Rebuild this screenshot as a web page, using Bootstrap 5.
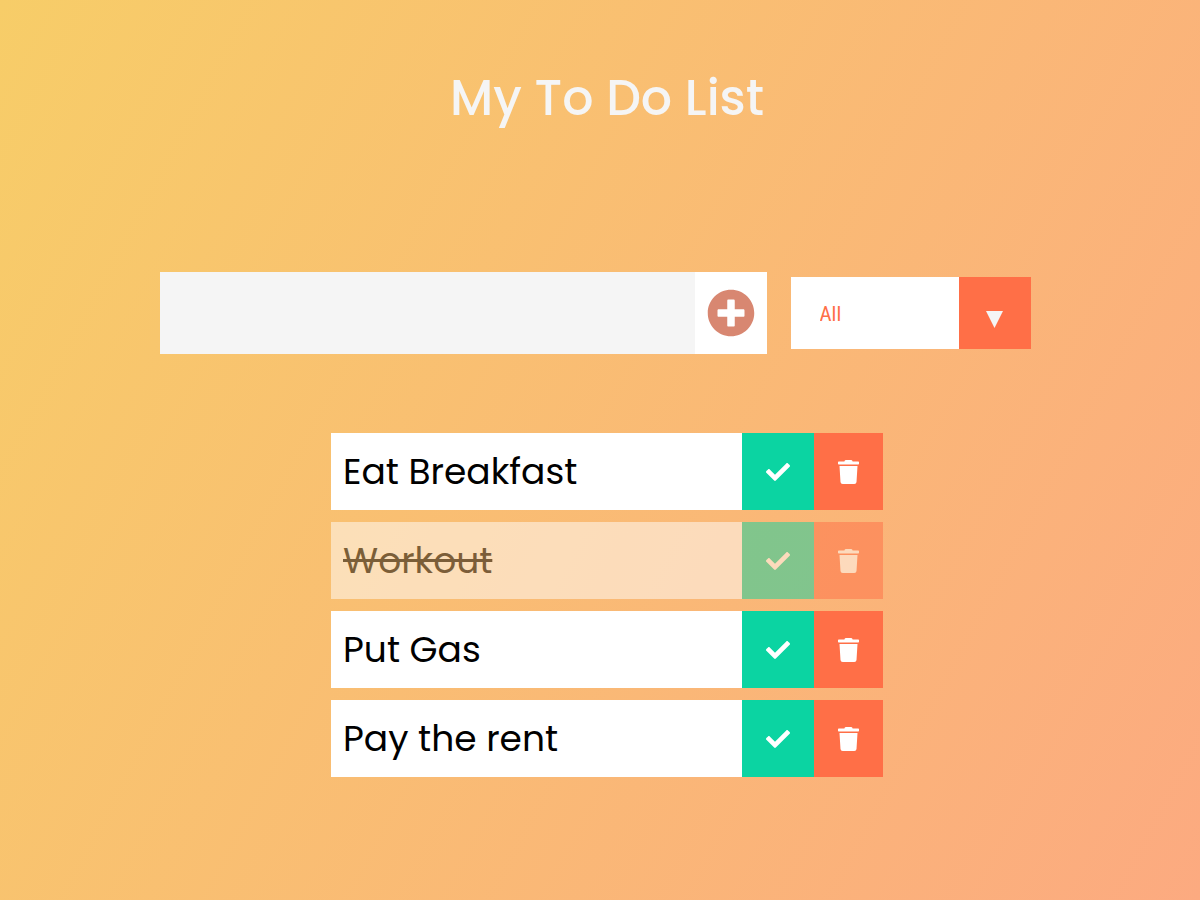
<!DOCTYPE html>
<html lang="en">
<head>
<meta charset="utf-8">
<meta name="viewport" content="width=device-width, initial-scale=1">
<title>My To Do List</title>
<link href="https://cdn.jsdelivr.net/npm/bootstrap@5.3.0/dist/css/bootstrap.min.css" rel="stylesheet">
<style>
  body {
    font-family: Poppins, Inter, sans-serif;
    color: #f5f5f5;
    min-height: 100vh;
    background: linear-gradient(118deg, #f7cd68, #fcaa80);
  }
  .page-shift { padding-left: 14px; }
  .page-title { font-size: 49px; line-height: 72px; font-weight: 500; padding: 62px 0 58px; margin-bottom: 80px; }
  .entry-form { margin-bottom: 79px; gap: 24px; padding-right: 24px; }
  .entry-group { width: 607px; height: 82px; max-width: 100%; }
  .entry-input { background: #f5f5f5; font-size: 32px; border: 0; }
  .entry-input:focus { background: #fff; box-shadow: none; }
  .entry-add { width: 72px; background: #fff; color: #d88771; }
  .filter { width: 240px; height: 72px; background: #fff; }
  .filter-select { appearance: none; color: #ff6f47; font: 21px/30px "Roboto Condensed", Roboto, sans-serif; padding: 2px 72px 0 29px; }
  .filter-arrow { width: 72px; padding-top: 12px; background: #ff6f47; color: #f5f5f5; pointer-events: none; }
  .todo-list { max-width: 552px; gap: 12px; }
  .todo-item { height: 77px; background: #fff; color: #000; font-size: 36px; }
  .todo-item.completed { opacity: .5; }
  .todo-item.completed .todo-text { text-decoration: line-through; }
  .todo-check { width: 72px; background: #0bd4a2; color: #fff; }
  .todo-trash { width: 69px; background: #ff6f47; color: #fff; }
</style>
</head>
<body>
<svg class="d-none">
  <symbol id="plus" viewBox="0 0 512 512"><path d="M256 8C119 8 8 119 8 256s111 248 248 248 248-111 248-248S393 8 256 8zm144 276c0 6.600-5.400 12-12 12h-92v92c0 6.600-5.400 12-12 12h-56c-6.600 0-12-5.400-12-12v-92h-92c-6.600 0-12-5.400-12-12v-56c0-6.600 5.400-12 12-12h92v-92c0-6.600 5.400-12 12-12h56c6.600 0 12 5.400 12 12v92h92c6.600 0 12 5.400 12 12v56z"/></symbol>
  <symbol id="check" viewBox="0 0 512 512"><path d="M173.898 439.404l-166.4-166.4c-9.997-9.997-9.997-26.206 0-36.204l36.203-36.204c9.997-9.998 26.207-9.998 36.204 0L192 312.690 432.095 72.596c9.997-9.997 26.207-9.997 36.204 0l36.203 36.204c9.997 9.997 9.997 26.206 0 36.204l-294.400 294.401c-9.998 9.997-26.207 9.997-36.204-.001z"/></symbol>
  <symbol id="trash" viewBox="0 0 448 512"><path d="M432 32H312l-9.400-18.700A24 24 0 0 0 281.100 0H166.800a23.720 23.720 0 0 0-21.400 13.300L136 32H16A16 16 0 0 0 0 48v32a16 16 0 0 0 16 16h416a16 16 0 0 0 16-16V48a16 16 0 0 0-16-16zM32 128l21.200 339a48 48 0 0 0 47.900 45h245.800a48 48 0 0 0 47.900-45L416 128z"/></symbol>
</svg>
<div class="page-shift">
  <header><h1 class="page-title text-center">My To Do List</h1></header>
  <main>
    <form class="entry-form d-flex flex-wrap justify-content-center align-items-center">
      <div class="entry-group d-flex">
        <input type="text" class="entry-input form-control rounded-0" aria-label="New task">
        <button type="button" class="entry-add btn rounded-0 border-0 p-0 flex-shrink-0 d-flex align-items-center justify-content-center" aria-label="Add task">
          <svg width="48" height="48" fill="currentColor"><use href="#plus"/></svg>
        </button>
      </div>
      <div class="filter position-relative">
        <select class="filter-select w-100 h-100 border-0 rounded-0 bg-transparent" aria-label="Filter tasks">
          <option>All</option>
          <option>Completed</option>
          <option>Uncompleted</option>
        </select>
        <span class="filter-arrow position-absolute top-0 end-0 h-100 d-flex align-items-center justify-content-center">
          <svg width="17" height="17" viewBox="0 0 17 17" fill="currentColor"><path d="M0 0H17L8.500 17z"/></svg>
        </span>
      </div>
    </form>
    <ul class="todo-list list-unstyled d-flex flex-column mx-auto mb-0">
      <li class="todo-item d-flex">
        <span class="todo-text flex-grow-1 align-self-center px-2 ms-1">Eat Breakfast</span>
        <button type="button" class="todo-check btn rounded-0 border-0 p-0 d-flex align-items-center justify-content-center" aria-label="Complete Eat Breakfast"><svg width="24" height="24" fill="currentColor"><use href="#check"/></svg></button>
        <button type="button" class="todo-trash btn rounded-0 border-0 p-0 d-flex align-items-center justify-content-center" aria-label="Delete Eat Breakfast"><svg width="21" height="24" fill="currentColor"><use href="#trash"/></svg></button>
      </li>
      <li class="todo-item completed d-flex">
        <span class="todo-text flex-grow-1 align-self-center px-2 ms-1">Workout</span>
        <button type="button" class="todo-check btn rounded-0 border-0 p-0 d-flex align-items-center justify-content-center" aria-label="Complete Workout"><svg width="24" height="24" fill="currentColor"><use href="#check"/></svg></button>
        <button type="button" class="todo-trash btn rounded-0 border-0 p-0 d-flex align-items-center justify-content-center" aria-label="Delete Workout"><svg width="21" height="24" fill="currentColor"><use href="#trash"/></svg></button>
      </li>
      <li class="todo-item d-flex">
        <span class="todo-text flex-grow-1 align-self-center px-2 ms-1">Put Gas</span>
        <button type="button" class="todo-check btn rounded-0 border-0 p-0 d-flex align-items-center justify-content-center" aria-label="Complete Put Gas"><svg width="24" height="24" fill="currentColor"><use href="#check"/></svg></button>
        <button type="button" class="todo-trash btn rounded-0 border-0 p-0 d-flex align-items-center justify-content-center" aria-label="Delete Put Gas"><svg width="21" height="24" fill="currentColor"><use href="#trash"/></svg></button>
      </li>
      <li class="todo-item d-flex">
        <span class="todo-text flex-grow-1 align-self-center px-2 ms-1">Pay the rent</span>
        <button type="button" class="todo-check btn rounded-0 border-0 p-0 d-flex align-items-center justify-content-center" aria-label="Complete Pay the rent"><svg width="24" height="24" fill="currentColor"><use href="#check"/></svg></button>
        <button type="button" class="todo-trash btn rounded-0 border-0 p-0 d-flex align-items-center justify-content-center" aria-label="Delete Pay the rent"><svg width="21" height="24" fill="currentColor"><use href="#trash"/></svg></button>
      </li>
    </ul>
  </main>
</div>
<script src="https://cdn.jsdelivr.net/npm/bootstrap@5.3.0/dist/js/bootstrap.bundle.min.js"></script>
</body>
</html>
